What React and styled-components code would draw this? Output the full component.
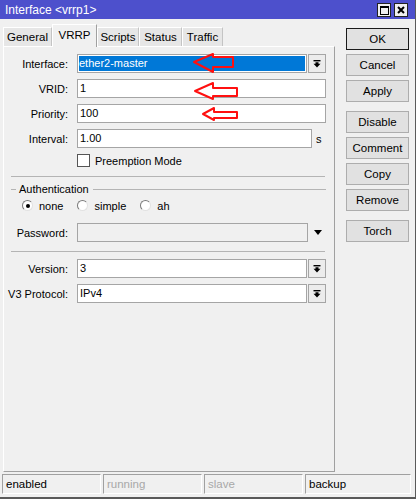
import React from "react";
import styled, { createGlobalStyle } from "styled-components";

const GlobalStyle = createGlobalStyle`
  html, body { margin: 0; padding: 0; background: #f0f0f0; }
  body {
    font-family: "Liberation Sans", Arial, sans-serif;
    font-size: 11px;
    color: #000;
  }
  * { box-sizing: border-box; }
`;

const Window = styled.div`
  width: 416px;
  height: 499px;
  background: #f0f0f0;
  border-right: 1px solid #5a5a5a;
  border-bottom: 2px solid #5a5a5a;
  display: flex;
  flex-direction: column;
  overflow: hidden;
`;

const TitleBar = styled.div`
  height: 19px;
  flex: none;
  background: #4d50cc;
  color: #fff;
  display: flex;
  align-items: center;
  justify-content: space-between;
  padding: 0 7px 0 5px;
`;

const TitleText = styled.span`
  font-size: 12px;
  line-height: 14px;
`;

const TitleButtons = styled.div`
  display: flex;
  gap: 3px;
  margin-top: 1px;
`;

const TitleButton = styled.div`
  width: 14px;
  height: 14px;
  background: #f0f0f0;
  border: 1px solid #222;
  display: flex;
  align-items: center;
  justify-content: center;
`;

const Body = styled.div`
  display: flex;
  padding-left: 3px;
`;

const Main = styled.div`
  width: 332px;
  display: flex;
  flex-direction: column;
`;

const Tabs = styled.div`
  height: 27px;
  padding-top: 5px;
  display: flex;
  align-items: flex-end;
  position: relative;
  z-index: 1;
`;

const Tab = styled.div`
  width: ${(p) => p.$w}px;
  height: ${(p) => (p.$active ? 23 : 19)}px;
  margin-bottom: ${(p) => (p.$active ? -1 : 0)}px;
  padding-top: ${(p) => (p.$active ? 4 : 3)}px;
  text-align: center;
  line-height: 13px;
  font-size: 11.5px;
  background: ${(p) => (p.$active ? "#f0f0f0" : "#e6e6e6")};
  border: 1px solid;
  border-bottom: none;
  border-color: ${(p) =>
    p.$active ? "#ffffff #a0a0a0 #a0a0a0 #ffffff" : "#ffffff #c4c4c4 #c4c4c4 #ffffff"};
`;

const Panel = styled.div`
  position: relative;
  height: 426px;
  border: 1px solid;
  border-color: #ffffff #a0a0a0 #a0a0a0 #ffffff;
  padding-top: 7px;
`;

const Row = styled.div`
  display: flex;
  align-items: center;
  height: ${(p) => p.$h || 19}px;
  margin-top: ${(p) => p.$mt || 0}px;
`;

const Label = styled.span`
  width: 64px;
  margin-right: 9px;
  text-align: right;
  white-space: nowrap;
`;

const TextBox = styled.div`
  width: ${(p) => p.$w}px;
  height: 19px;
  line-height: 17px;
  padding-left: ${(p) => (p.$selected ? 1 : 2)}px;
  border: 1px solid #a5a5a5;
  background: ${(p) => (p.$selected ? "#0078d7" : p.$disabled ? "#f0f0f0" : "#fff")};
  color: ${(p) => (p.$selected ? "#fff" : "#000")};
  box-shadow: ${(p) => (p.$selected ? "inset 0 0 0 1px #fff" : "none")};
  white-space: nowrap;
`;

const DropButton = styled.div`
  width: 18px;
  height: 19px;
  margin-left: 1px;
  border: 1px solid #a5a5a5;
  background: #ececec;
  display: flex;
  align-items: center;
  justify-content: center;
`;

const Unit = styled.span`
  margin-left: 4px;
`;

const CheckBox = styled.span`
  width: 13px;
  height: 13px;
  margin-left: 73px;
  margin-right: 5px;
  background: #fff;
  border: 1px solid #555;
`;

const Separator = styled.div`
  height: 1px;
  margin: ${(p) => p.$mt}px 9px 0 7px;
  background: #b4b4b4;
`;

const GroupTitle = styled.div`
  display: flex;
  align-items: center;
  height: 13px;
  margin: 6px 8px 0 7px;
`;

const GroupLine = styled.span`
  height: 1px;
  background: #b4b4b4;
  width: ${(p) => (p.$w ? `${p.$w}px` : "auto")};
  flex: ${(p) => (p.$w ? "none" : "1")};
`;

const GroupText = styled.span`
  margin: 0 4px 0 3px;
  line-height: 13px;
`;

const RadioRow = styled.div`
  display: flex;
  align-items: center;
  height: 13px;
  margin-top: 3px;
  padding-left: 18px;
  gap: 14px;
`;

const RadioItem = styled.label`
  display: flex;
  align-items: center;
  gap: 6px;
`;

const RadioCircle = styled.span`
  width: 11px;
  height: 11px;
  border-radius: 50%;
  border: 1px solid;
  border-color: #7a7a7a #e2e2e2 #e2e2e2 #7a7a7a;
  background: #fff;
  display: flex;
  align-items: center;
  justify-content: center;

  &::after {
    content: "";
    width: 4px;
    height: 4px;
    border-radius: 50%;
    background: ${(p) => (p.$on ? "#000" : "transparent")};
  }
`;

const OpenArrow = styled.span`
  margin-left: 6px;
  width: 0;
  height: 0;
  border-left: 4.5px solid transparent;
  border-right: 4.5px solid transparent;
  border-top: 5px solid #000;
`;

const Overlay = styled.svg`
  position: absolute;
  left: -1px;
  top: -1px;
  width: 332px;
  height: 426px;
  pointer-events: none;
  overflow: visible;
`;

const Side = styled.div`
  width: 63px;
  margin-left: 11px;
  padding-top: 9px;
  display: flex;
  flex-direction: column;
`;

const Button = styled.div`
  height: 22px;
  margin-top: ${(p) => p.$mt}px;
  line-height: 20px;
  text-align: center;
  font-size: 11.5px;
  background: #e1e1e1;
  border: 1px solid ${(p) => (p.$default ? "#1a1a1a" : "#adadad")};
`;

const StatusBar = styled.div`
  display: flex;
  gap: 2px;
  margin-top: 2px;
  padding-left: 2px;
`;

const StatusCell = styled.div`
  width: ${(p) => p.$w}px;
  height: 20px;
  line-height: 18px;
  padding-left: 3px;
  border: 1px solid;
  border-color: #a0a0a0 #ffffff #ffffff #a0a0a0;
  color: ${(p) => (p.$dim ? "#a8a8a8" : "#000")};
  font-size: 11.5px;
`;

const ComboIcon = () => (
  <svg width="8" height="8" viewBox="0 0 8 8">
    <rect x="0.5" y="0" width="7" height="1.4" fill="#000" />
    <polygon points="2.5,2.3 5.5,2.3 5.5,3.8 7.5,3.8 4,7.5 0.5,3.8 2.5,3.8" fill="#000" />
  </svg>
);

// red hand-drawn annotation arrows, page coordinates
const arrow = (tip, y, back, end, top, bottom, sTop, sBot) =>
  `${tip},${y} ${back},${top} ${back},${sTop} ${end},${sTop} ${end},${sBot} ${back},${sBot} ${back},${bottom}`;

const arrows = [
  arrow(194, 62, 213, 233, 54, 72, 57, 67),
  arrow(195, 91, 213, 237, 83, 99, 88, 96),
  arrow(203, 114, 214, 237, 108, 120, 112, 118),
];

const Combo = ({ value, selected }) => (
  <>
    <TextBox $w={230} $selected={selected}>{value}</TextBox>
    <DropButton>
      <ComboIcon />
    </DropButton>
  </>
);

const tabs = [
  { name: "General", w: 49 },
  { name: "VRRP", w: 45, active: true },
  { name: "Scripts", w: 42 },
  { name: "Status", w: 43 },
  { name: "Traffic", w: 41 },
];

const buttons = [
  { text: "OK", mt: 0, def: true },
  { text: "Cancel", mt: 4 },
  { text: "Apply", mt: 4 },
  { text: "Disable", mt: 9 },
  { text: "Comment", mt: 4 },
  { text: "Copy", mt: 4 },
  { text: "Remove", mt: 4 },
  { text: "Torch", mt: 9 },
];

const App = () => {
  return (
    <Window>
      <GlobalStyle />
      <TitleBar>
        <TitleText>Interface &lt;vrrp1&gt;</TitleText>
        <TitleButtons>
          <TitleButton>
            <svg width="9" height="9" viewBox="0 0 9 9">
              <rect x="0.5" y="0.5" width="8" height="8" fill="none" stroke="#000" />
              <rect x="0" y="0" width="9" height="2" fill="#000" />
            </svg>
          </TitleButton>
          <TitleButton>
            <svg width="8" height="8" viewBox="0 0 8 8">
              <path d="M1 1 L7 7 M7 1 L1 7" stroke="#000" strokeWidth="2" />
            </svg>
          </TitleButton>
        </TitleButtons>
      </TitleBar>

      <Body>
        <Main>
          <Tabs>
            {tabs.map((t) => (
              <Tab key={t.name} $w={t.w} $active={t.active}>
                {t.name}
              </Tab>
            ))}
          </Tabs>
          <Panel>
            <Row>
              <Label>Interface:</Label>
              <Combo value="ether2-master" selected />
            </Row>
            <Row $mt={6}>
              <Label>VRID:</Label>
              <TextBox $w={249}>1</TextBox>
            </Row>
            <Row $mt={6}>
              <Label>Priority:</Label>
              <TextBox $w={249}>100</TextBox>
            </Row>
            <Row $mt={6}>
              <Label>Interval:</Label>
              <TextBox $w={235}>1.00</TextBox>
              <Unit>s</Unit>
            </Row>
            <Row $mt={6} $h={13}>
              <CheckBox />
              <span>Preemption Mode</span>
            </Row>

            <Separator $mt={9} />
            <GroupTitle>
              <GroupLine $w={5} />
              <GroupText>Authentication</GroupText>
              <GroupLine />
            </GroupTitle>
            <RadioRow>
              <RadioItem>
                <RadioCircle $on />
                none
              </RadioItem>
              <RadioItem>
                <RadioCircle />
                simple
              </RadioItem>
              <RadioItem>
                <RadioCircle />
                ah
              </RadioItem>
            </RadioRow>
            <Row $mt={11}>
              <Label>Password:</Label>
              <TextBox $w={231} $disabled />
              <OpenArrow />
            </Row>

            <Separator $mt={9} />
            <Row $mt={7}>
              <Label>Version:</Label>
              <Combo value="3" />
            </Row>
            <Row $mt={6}>
              <Label>V3 Protocol:</Label>
              <Combo value="IPv4" />
            </Row>

            <Overlay viewBox="3 46 332 426">
              {arrows.map((pts, i) => (
                <polygon
                  key={i}
                  points={pts}
                  fill="none"
                  stroke="#ff1010"
                  strokeWidth="2"
                  strokeLinejoin="round"
                />
              ))}
            </Overlay>
          </Panel>
        </Main>

        <Side>
          {buttons.map((b) => (
            <Button key={b.text} $mt={b.mt} $default={b.def}>
              {b.text}
            </Button>
          ))}
        </Side>
      </Body>

      <StatusBar>
        <StatusCell $w={99}>enabled</StatusCell>
        <StatusCell $w={99} $dim>running</StatusCell>
        <StatusCell $w={99} $dim>slave</StatusCell>
        <StatusCell $w={106}>backup</StatusCell>
      </StatusBar>
    </Window>
  );
};

export default App;
